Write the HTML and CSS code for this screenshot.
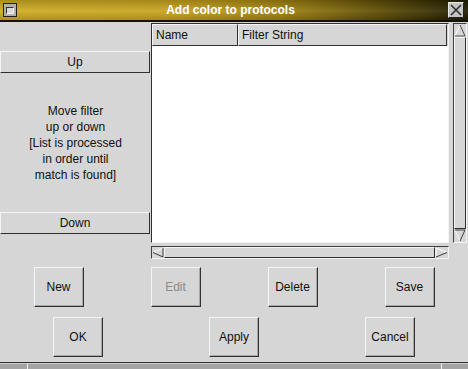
FILE: index.html
```html
<!DOCTYPE html>
<html lang="en">
<head>
    <meta charset="UTF-8">
    <meta name="viewport" content="width=device-width, initial-scale=1.0">
    <title>Add color to protocols</title>
    <link rel="stylesheet" href="styles.css">
</head>
<body>
    <div id="window">
        <div id="titlebar">
            <span class="win-icon"><span></span></span>
            <span class="title">Add color to protocols</span>
            <span class="close-box">
                <svg width="14" height="14" viewBox="0 0 14 14"><path d="M2 2 L12 12 M12 2 L2 12" stroke="#303030" stroke-width="1.6"/></svg>
            </span>
        </div>

        <div id="main">
            <div id="side">
                <button class="side-button">Up</button>
                <p class="hint">Move filter<br>up or down<br>[List is processed<br>in order until<br>match is found]</p>
                <button class="side-button">Down</button>
            </div>

            <div id="list-area">
                <div class="list-row">
                    <div id="list">
                        <div class="list-head">
                            <span class="col col-name">Name</span>
                            <span class="col col-filter">Filter String</span>
                        </div>
                        <div class="list-body"></div>
                    </div>
                    <div class="vscroll">
                        <svg width="12" height="13" viewBox="0 0 12 13"><polygon points="6,1 11,12 1,12" fill="#d6d6d6" stroke="#fff"/><path d="M6 1 L11 12 L1 12" fill="none" stroke="#404040"/></svg>
                        <div class="vthumb"></div>
                        <svg width="12" height="13" viewBox="0 0 12 13"><polygon points="1,1 11,1 6,12" fill="#d6d6d6"/><path d="M1 1 L6 12" stroke="#fff"/><path d="M1 1 L11 1 M11 1 L6 12" stroke="#404040"/></svg>
                    </div>
                </div>
                <div class="hscroll">
                    <svg width="12" height="11" viewBox="0 0 12 11"><polygon points="1,5.5 11,1 11,10" fill="#d6d6d6"/><path d="M1 5.5 L11 1" stroke="#fff"/><path d="M1 5.5 L11 10 L11 1" fill="none" stroke="#404040"/></svg>
                    <div class="hthumb"></div>
                    <svg width="13" height="11" viewBox="0 0 13 11"><polygon points="1,1 12,5.5 1,10" fill="#d6d6d6"/><path d="M1 10 L1 1 L12 5.5" fill="none" stroke="#fff"/><path d="M12 5.5 L1 10" stroke="#404040"/></svg>
                </div>
            </div>
        </div>

        <div class="button-row">
            <div class="cell"><button class="btn">New</button></div>
            <div class="cell"><button class="btn" disabled>Edit</button></div>
            <div class="cell"><button class="btn">Delete</button></div>
            <div class="cell"><button class="btn">Save</button></div>
        </div>
        <div class="button-row second">
            <div class="cell"><button class="btn">OK</button></div>
            <div class="cell"><button class="btn">Apply</button></div>
            <div class="cell"><button class="btn">Cancel</button></div>
        </div>

        <div id="frame-bottom">
            <span class="seg seg-left"></span>
            <span class="seg seg-mid"></span>
            <span class="seg seg-right"></span>
        </div>
    </div>
</body>
</html>
```

FILE: styles.css
```css
* {
    box-sizing: border-box;
}

body {
    margin: 0;
    background-color: #d6d6d6;
    font-family: "Liberation Sans", Arial, sans-serif;
    font-size: 12px;
    color: #101010;
}

#window {
    width: 468px;
    height: 369px;
    overflow: hidden;
    display: flex;
    flex-direction: column;
}

#titlebar {
    position: relative;
    height: 22px;
    flex: none;
    display: flex;
    align-items: center;
    border-bottom: 2px solid #141200;
    background: linear-gradient(to right, #cfad22 0%, #c8a41e 35%, #a0820f 60%, #5a4a04 82%, #1e1a00 100%);
}

#titlebar::before {
    content: "";
    position: absolute;
    inset: 0;
    background: linear-gradient(to bottom, rgba(0, 0, 0, 0.18), rgba(255, 255, 255, 0.08) 55%, rgba(0, 0, 0, 0.15));
}

.win-icon {
    position: relative;
    z-index: 1;
    margin-left: 3px;
    width: 14px;
    height: 14px;
    border: 1px solid #202020;
    background: #b0b0b0;
    display: flex;
    align-items: center;
    justify-content: center;
}

.win-icon span {
    width: 8px;
    height: 7px;
    border: 1px solid #303030;
    border-right-color: #f0f0f0;
    border-bottom-color: #f0f0f0;
    background: #d8d8d8;
}

.title {
    position: relative;
    z-index: 1;
    flex: 1;
    text-align: center;
    color: #fff;
    font-weight: bold;
    font-size: 12px;
    margin-right: 4px;
}

.close-box {
    position: relative;
    z-index: 1;
    width: 16px;
    height: 16px;
    margin-right: 4px;
    border: 1px solid #e8e8e8;
    border-right-color: #202020;
    border-bottom-color: #202020;
    background: #c4c4c4;
    display: flex;
    align-items: center;
    justify-content: center;
}

#main {
    display: flex;
    margin-top: 1px;
    height: 236px;
    flex: none;
}

#side {
    width: 151px;
    height: 221px;
    display: flex;
    flex-direction: column;
    padding-top: 28px;
    padding-bottom: 10px;
}

.side-button {
    width: 150px;
    height: 22px;
    padding: 0;
    font: inherit;
    color: #101010;
    background: #d6d6d6;
    border: 1px solid #f4f4f4;
    border-right-color: #303030;
    border-bottom-color: #303030;
}

.hint {
    flex: 1;
    margin: 0;
    display: flex;
    align-items: center;
    justify-content: center;
    text-align: center;
    line-height: 16px;
}

#list-area {
    width: 317px;
    display: flex;
    flex-direction: column;
}

.list-row {
    display: flex;
    height: 221px;
}

#list {
    width: 298px;
    display: flex;
    flex-direction: column;
    border: 1px solid #303030;
    border-right-color: #f4f4f4;
    border-bottom-color: #f4f4f4;
}

.list-head {
    display: flex;
    height: 22px;
    flex: none;
}

.col {
    display: flex;
    align-items: center;
    padding-left: 3px;
    background: #d6d6d6;
    border: 1px solid #f4f4f4;
    border-right-color: #303030;
    border-bottom-color: #303030;
}

.col-name {
    width: 86px;
}

.col-filter {
    width: 209px;
}

.list-body {
    flex: 1;
    background: #fff;
}

.vscroll {
    width: 14px;
    height: 220px;
    margin-left: 4px;
    display: flex;
    flex-direction: column;
    border: 1px solid #404040;
    border-right-color: #f4f4f4;
    border-bottom-color: #f4f4f4;
}

.vscroll svg,
.hscroll svg {
    flex: none;
    display: block;
}

.vthumb {
    flex: 1;
    background: #d6d6d6;
    border: 1px solid #f4f4f4;
    border-right-color: #303030;
    border-bottom-color: #303030;
}

.hscroll {
    width: 298px;
    height: 13px;
    margin-top: 3px;
    display: flex;
    align-items: center;
    border: 1px solid #404040;
    border-right-color: #f4f4f4;
    border-bottom-color: #f4f4f4;
}

.hthumb {
    flex: 1;
    height: 11px;
    background: #d6d6d6;
    border: 1px solid #f4f4f4;
    border-right-color: #303030;
    border-bottom-color: #303030;
}

.button-row {
    display: flex;
    margin-top: 8px;
    flex: none;
}

.button-row.second {
    margin-top: 10px;
}

.cell {
    flex: 1;
    display: flex;
    justify-content: center;
}

.btn {
    width: 50px;
    height: 40px;
    padding: 0;
    font: inherit;
    color: #101010;
    background: #d6d6d6;
    border: 1px solid #f4f4f4;
    border-right-color: #303030;
    border-bottom-color: #303030;
    box-shadow: inset -1px -1px 0 #a8a8a8;
}

.btn:disabled {
    color: #8a8a8a;
}

#frame-bottom {
    margin-top: 5px;
    height: 7px;
    flex: none;
    display: flex;
    border-top: 1px solid #303030;
}

.seg {
    height: 100%;
    background: #a4a4a4;
    border-top: 1px solid #c8c8c8;
}

.seg-left {
    width: 28px;
    border-right: 1px solid #f0f0f0;
}

.seg-mid {
    flex: 1;
    border-right: 1px solid #f0f0f0;
}

.seg-right {
    width: 26px;
}
```
